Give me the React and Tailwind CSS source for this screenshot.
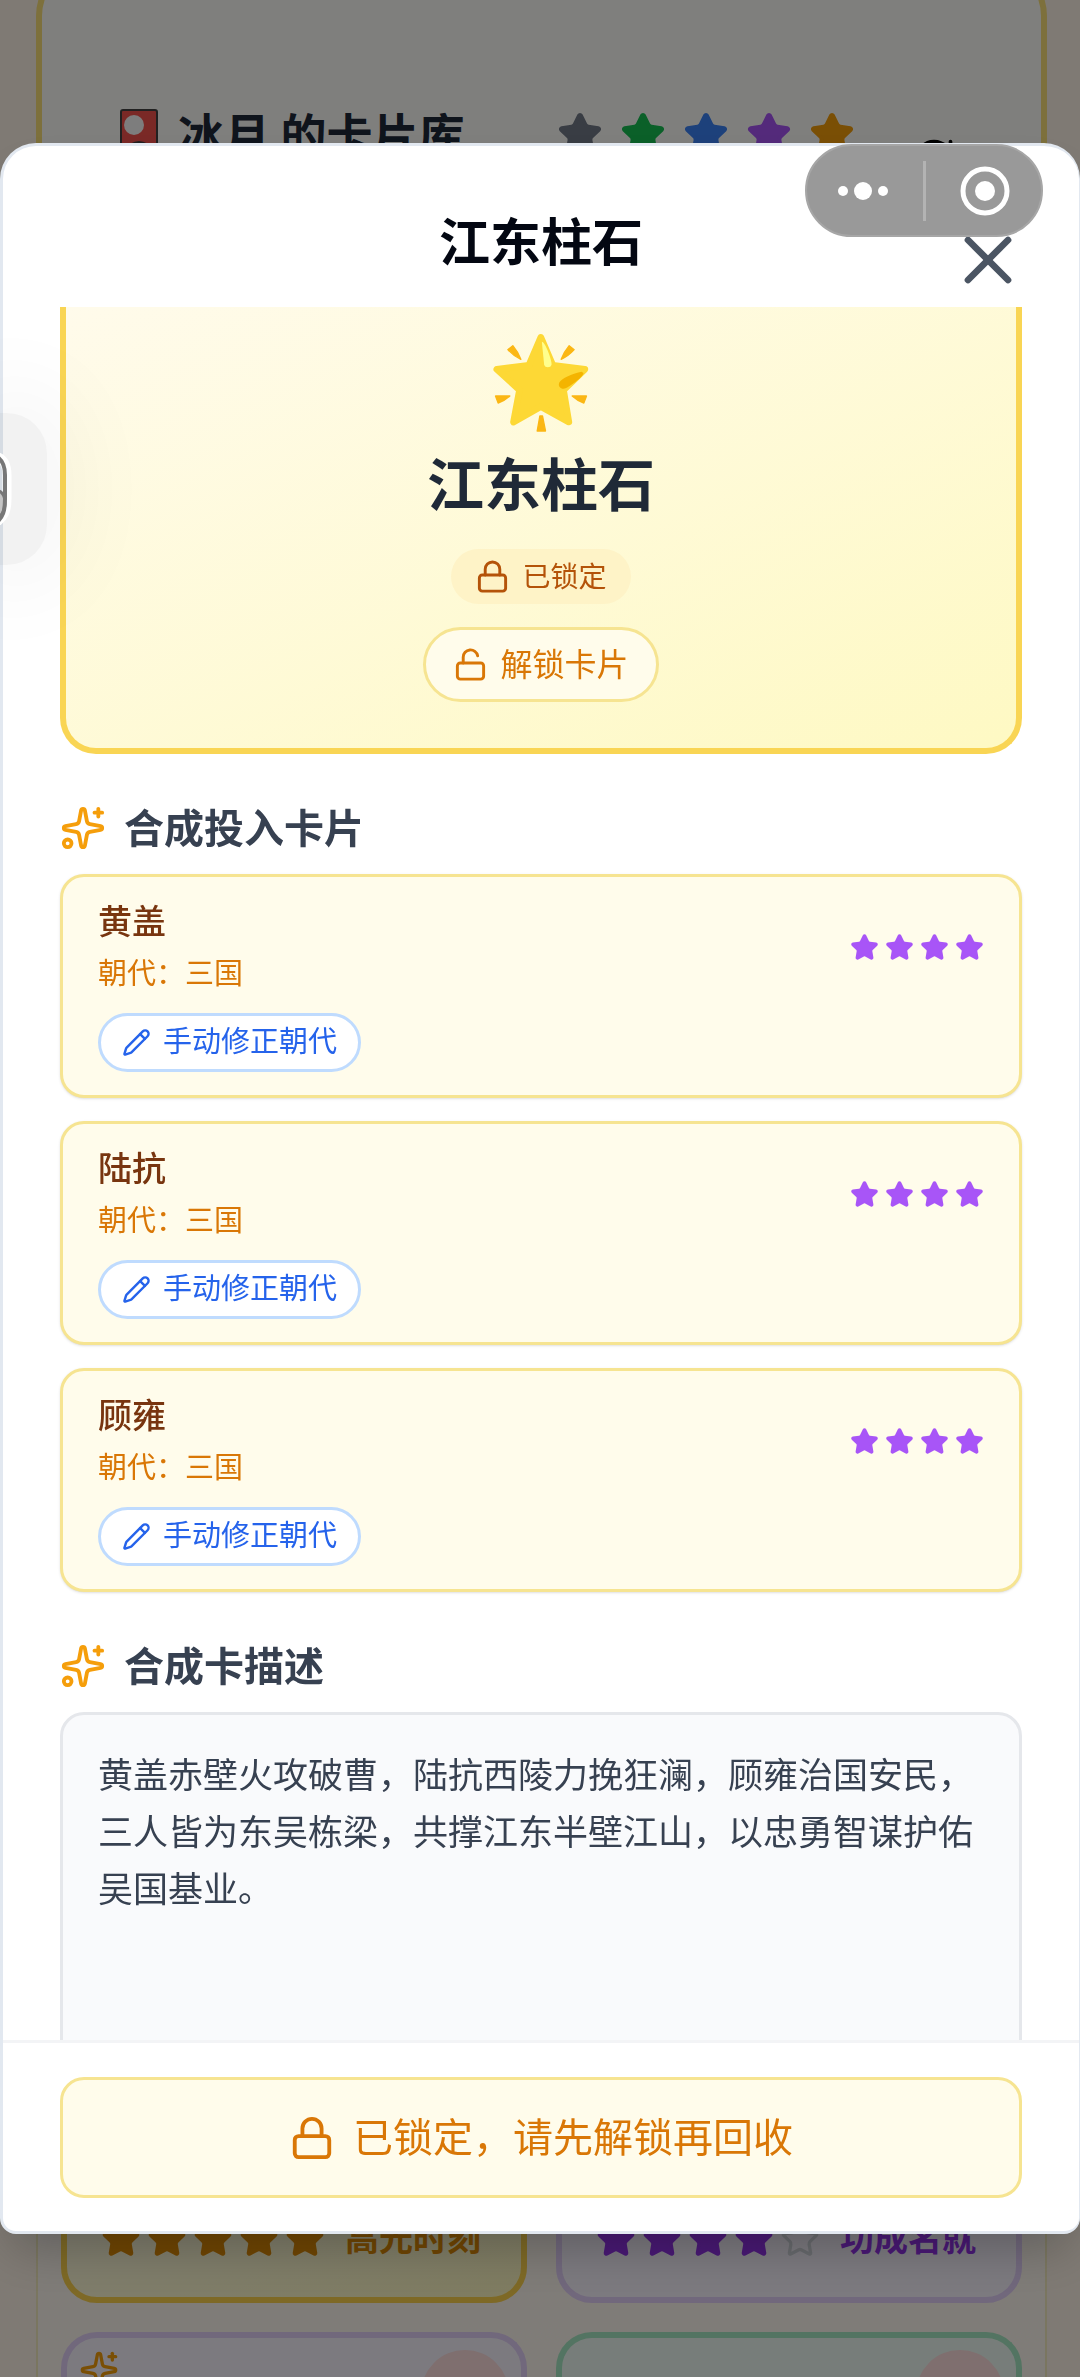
import { Lock, LockOpen, Pencil, RotateCw, Sparkles, Star, X } from "lucide-react";

const materials = [
  { id: 1, name: "黄盖", dynasty: "三国", stars: 4 },
  { id: 2, name: "陆抗", dynasty: "三国", stars: 4 },
  { id: 3, name: "顾雍", dynasty: "三国", stars: 4 },
];

const description =
  "黄盖赤壁火攻破曹，陆抗西陵力挽狂澜，顾雍治国安民，三人皆为东吴栋梁，共撑江东半壁江山，以忠勇智谋护佑吴国基业。";

const rarityColors = [
  "text-[#727a88]",
  "text-[#16c052]",
  "text-[#3b82f6]",
  "text-[#a855f7]",
  "text-[#f59e0b]",
];

const GlowingStar = () => (
  <svg viewBox="150 60 305 315" className="h-[105px] w-[102px]" aria-hidden="true">
    <path
      d="M302 82 338 166 434 178 370 240 386 336 302 290 220 336 238 240 170 178 266 166Z"
      fill="#fdd835"
      stroke="#fdd835"
      strokeWidth="20"
      strokeLinejoin="round"
    />
    <path d="M305 95C315 95 336 152 334 164C332 174 314 174 312 164Z" fill="#ffff8d" />
    <path d="M424 185C400 189 362 206 357 218C352 232 366 240 378 234C394 226 430 200 430 189Z" fill="#f4b400" />
    <g fill="#fbb714" stroke="#fbb714" strokeWidth="4" strokeLinejoin="round">
      <path d="M203 119 218 107Q234 126 242 148Q220 138 203 119Z" />
      <path d="M402 119 387 107Q371 126 363 148Q385 138 402 119Z" />
      <path d="M166 258 209 258Q194 272 174 279Z" />
      <path d="M439 258 396 258Q411 272 431 279Z" />
      <path d="M299 318H307L316 363H291Z" />
    </g>
  </svg>
);

const HanafudaCard = () => (
  <svg viewBox="0 0 38 56" className="h-14 w-[38px]" aria-hidden="true">
    <rect x="1" y="1" width="36" height="54" rx="2" fill="#f4524d" stroke="#424242" strokeWidth="2" />
    <circle cx="14" cy="16" r="10" fill="#fafafa" />
    <path d="M2 54V42Q19 22 36 42V54Z" fill="#424242" />
  </svg>
);

const SectionTitle = ({ children }) => (
  <h3 className="mt-[46px] mb-[18px] flex h-14 items-center gap-[18px] text-[40px] leading-[56px] font-bold text-[#374151]">
    <Sparkles className="size-[46px] text-[#f59e0b]" />
    <span className="pb-1">{children}</span>
  </h3>
);

const MaterialCard = ({ name, dynasty, stars }) => (
  <li className="rounded-3xl border-3 border-[#f6e491] bg-[#fffceb] px-[35px] pt-5 pb-[23px] shadow-sm">
    <div className="flex items-center justify-between">
      <div>
        <div className="text-[34px] leading-[46px] font-medium text-[#78350f]">{name}</div>
        <div className="mt-2 text-[29px] leading-10 text-[#d97706]">朝代：{dynasty}</div>
      </div>
      <div className="flex gap-1.5 pt-2">
        {Array.from({ length: stars }, (_, i) => (
          <Star key={i} className="size-[29px] fill-current text-[#a855f7]" />
        ))}
      </div>
    </div>
    <button
      type="button"
      className="mt-[22px] flex h-[59px] items-center gap-3 rounded-full border-3 border-[#bfdbfe] bg-white px-[21px] text-[29px] text-[#2563eb]"
    >
      <Pencil className="size-[29px]" />
      <span className="pb-1">手动修正朝代</span>
    </button>
  </li>
);

const CardRating = ({ filled, label }) => (
  <>
    {[1, 2, 3, 4, 5].map((n) => (
      <Star
        key={n}
        className={n <= filled ? "size-10 shrink-0 fill-current" : "size-10 shrink-0 text-gray-300"}
      />
    ))}
    <span className="ml-3.5 pb-1 text-[34px] leading-9 font-bold whitespace-nowrap">{label}</span>
  </>
);

const Library = () => (
  <div className="flex h-screen flex-col overflow-hidden bg-[#fff5e8] pr-[33px] pl-9">
    <header className="-mt-10 flex flex-1 items-start rounded-t-[56px] border-x-6 border-t-6 border-[#fae078] bg-[#fffffb] px-[78px] pt-[143px]">
      <HanafudaCard />
      <h1 className="ml-5 text-[46px] leading-[46px] font-bold whitespace-nowrap text-gray-800">冰月 的卡片库</h1>
      <div className="ml-[93px] flex gap-[17px] pt-0.5">
        {rarityColors.map((color) => (
          <Star key={color} className={`size-[46px] fill-current ${color}`} />
        ))}
      </div>
      <button type="button" aria-label="刷新" className="mt-[27px] mr-[7px] ml-auto text-black">
        <RotateCw className="size-11" />
      </button>
    </header>
    <main className="grid grid-cols-2 gap-x-[29px] gap-y-[29px] border-x-2 border-[#f4ecc0] bg-[#fff8f0] px-[23px]">
      <div className="flex h-[180px] items-end gap-1.5 rounded-[36px] border-6 border-[#fcd34d] bg-linear-to-br from-amber-50 to-yellow-100 px-[34px] pb-[38px] text-[#e08c06]">
        <CardRating filled={5} label="高光时刻" />
      </div>
      <div className="flex h-[180px] items-end gap-1.5 rounded-[36px] border-6 border-[#e2d0f8] bg-[#f8f4ff] px-[34px] pb-[38px] text-[#9333ea]">
        <CardRating filled={4} label="功成名就" />
      </div>
      <div className="flex h-[45px] justify-between overflow-hidden rounded-t-[36px] border-6 border-b-0 border-[#e2d0f8] bg-[#f8f4ff] px-3 pt-3">
        <Sparkles className="size-10 shrink-0 text-[#f59e0b]" />
        <div className="size-[88px] shrink-0 rounded-full bg-[#fedede]" />
      </div>
      <div className="flex h-[45px] justify-end overflow-hidden rounded-t-[36px] border-6 border-b-0 border-[#a7e8c4] bg-[#effbf4] px-3 pt-3">
        <div className="size-[88px] shrink-0 rounded-full bg-[#fedede]" />
      </div>
    </main>
  </div>
);

const MiniProgramCapsule = () => (
  <div className="fixed top-36 right-[37px] z-30 flex h-[93px] w-[238px] items-center rounded-full border-2 border-[#a6a6a6] bg-[#999999] text-white">
    <button type="button" aria-label="更多" className="flex flex-1 justify-center pr-1">
      <svg viewBox="0 0 50 20" className="h-5 w-[50px]" fill="currentColor">
        <circle cx="5" cy="10" r="5" />
        <circle cx="25" cy="10" r="9" />
        <circle cx="45" cy="10" r="5" />
      </svg>
    </button>
    <div className="h-[60px] w-[3px] bg-[#b3b3b3]" />
    <button type="button" aria-label="关闭小程序" className="flex flex-1 justify-center pl-1">
      <svg viewBox="0 0 50 50" className="size-[50px]" fill="currentColor">
        <circle cx="25" cy="25" r="22" fill="none" stroke="currentColor" strokeWidth="5" />
        <circle cx="25" cy="25" r="10" />
      </svg>
    </button>
  </div>
);

// Edge handle that peeks in from the left side of the screen
const EdgeHandle = () => (
  <div className="pointer-events-none fixed top-[413px] left-0 z-30 flex h-[152px] w-[47px] items-center rounded-r-[40px] bg-black/5 shadow-[0_0_90px_30px_rgba(0,0,0,0.04)]">
    <svg viewBox="0 0 12 72" className="h-[72px] w-3" fill="none">
      <path d="M-4 3C5 6 7 14 7 22V46C7 58 4 64-4 70" stroke="#fff" strokeWidth="9" />
      <path d="M-6 37C2 37 5 43 5 50S2 64-6 66Z" fill="#c4c4c4" stroke="#777" strokeWidth="3" />
      <path d="M-4 3C3 7 5 14 5 22V46C5 58 3 64-4 70" stroke="#777" strokeWidth="4" />
    </svg>
  </div>
);

export default function App() {
  return (
    <div className="font-['Noto_Sans_CJK_SC',sans-serif]">
      <Library />

      <div className="fixed inset-0 z-10 flex items-center bg-black/50">
        <section
          role="dialog"
          aria-labelledby="card-title"
          className="flex h-[88vh] w-full flex-col overflow-hidden rounded-t-[36px] rounded-b-2xl border-3 border-r border-slate-200 bg-white shadow-2xl"
        >
          <header className="grid grid-cols-[1fr_auto_1fr] items-start px-[51px] pt-[63px] pb-[7px]">
            <h2 id="card-title" className="col-start-2 text-[51px] leading-[60px] font-bold text-gray-950">
              江东柱石
            </h2>
            <button type="button" aria-label="关闭" className="mt-[11px] justify-self-end text-[#4b5563]">
              <X className="size-20" />
            </button>
          </header>

          <div className="min-h-0 flex-1 overflow-hidden px-[57px]">
            <div className="flex flex-col items-center rounded-b-[36px] border-x-6 border-b-6 border-[#f9d554] bg-linear-to-br from-[#fffbeb] to-[#fef9c3] pt-[23px] pb-[46px]">
              <GlowingStar />
              <div className="mt-3 text-[57px] leading-[68px] font-bold text-[#1f2937]">江东柱石</div>
              <div className="mt-[34px] flex h-[55px] items-center gap-3 rounded-full bg-[#fef3c7] px-6 text-[28px] text-[#b45309]">
                <Lock className="size-[35px]" />
                <span className="pb-0.5">已锁定</span>
              </div>
              <button
                type="button"
                className="mt-[23px] flex h-[75px] items-center gap-3 rounded-full border-3 border-[#f6e491] bg-[#fffceb] px-[27px] text-[32px] text-[#d97706]"
              >
                <LockOpen className="size-[35px]" />
                <span className="pb-1">解锁卡片</span>
              </button>
            </div>

            <SectionTitle>合成投入卡片</SectionTitle>
            <ul className="flex flex-col gap-[23px]">
              {materials.map((item) => (
                <MaterialCard key={item.id} {...item} />
              ))}
            </ul>

            <SectionTitle>合成卡描述</SectionTitle>
            <p className="min-h-[420px] rounded-3xl border-3 border-gray-200 bg-[#f9fafc] px-[35px] pt-[29px] pb-8 text-[35px] leading-[57px] text-[#374151]">
              {description}
            </p>
          </div>

          <footer className="border-t-3 border-gray-100 px-[57px] pt-[34px] pb-[33px]">
            <button
              type="button"
              className="flex h-[121px] w-full items-center justify-center gap-[18px] rounded-3xl border-3 border-[#f6e491] bg-[#fffceb] text-[40px] text-[#d97706]"
            >
              <Lock className="size-[46px]" />
              <span className="pb-1.5">已锁定，请先解锁再回收</span>
            </button>
          </footer>
        </section>
      </div>

      <MiniProgramCapsule />
      <EdgeHandle />
    </div>
  );
}
